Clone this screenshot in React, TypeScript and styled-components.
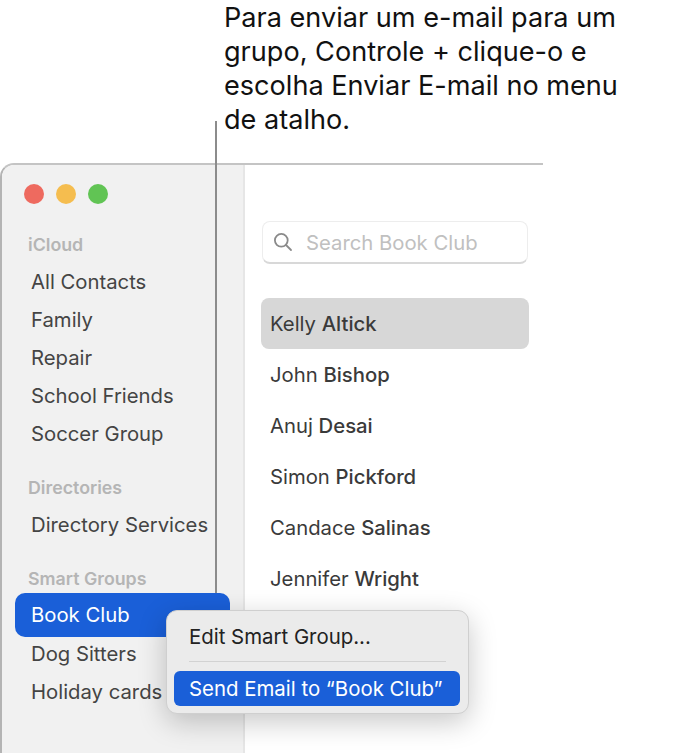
import styled, { createGlobalStyle } from "styled-components";

const GlobalStyle = createGlobalStyle`
  html, body {
    margin: 0;
    padding: 0;
    background: #ffffff;
  }
  body {
    font-family: Inter, "Liberation Sans", sans-serif;
    width: 673px;
    height: 753px;
    overflow: hidden;
  }
`;

const Page = styled.div`
  position: relative;
  width: 673px;
  height: 753px;
  overflow: hidden;
`;
const Caption = styled.div`
  height: 163px;
  box-sizing: border-box;
  padding: 1px 0 0 224px;
  font-size: 27.1px;
  line-height: 34px;
  color: #111111;
  white-space: nowrap;
`;
const Leader = styled.div`
  position: absolute;
  left: 215px;
  top: 121px;
  width: 2px;
  height: 472px;
  background: #8c8c8c;
`;
const Window = styled.div`
  width: 543px;
  height: 590px;
  box-sizing: border-box;
  display: flex;
  border-top: 2px solid #c4c4c4;
  border-left: 2px solid #b4b4b4;
  border-top-left-radius: 14px;
`;
const Sidebar = styled.div`
  width: 243px;
  flex: none;
  box-sizing: border-box;
  padding: 19px 0 0 13px;
  background: #f1f1f1;
  border-right: 2px solid #e6e6e6;
  border-top-left-radius: 12px;
`;
const Lights = styled.div`
  display: flex;
  gap: 12px;
  padding-left: 9px;
  margin-bottom: 28px;
`;
const Light = styled.span<{ $color: string }>`
  width: 20px;
  height: 20px;
  border-radius: 50%;
  background: ${(p) => p.$color};
`;
const SectionLabel = styled.div<{ $gap?: number }>`
  height: 24px;
  line-height: 26px;
  padding-left: 13px;
  margin-top: ${(p) => p.$gap ?? 0}px;
  margin-bottom: 7px;
  font-size: 17.8px;
  font-weight: 600;
  color: #b5b5b5;
`;
const SideItem = styled.div<{ $active?: boolean }>`
  width: 215px;
  box-sizing: border-box;
  padding-left: 16px;
  font-size: 20.3px;
  white-space: nowrap;
  border-radius: 10px;
  color: ${(p) => (p.$active ? "#ffffff" : "#444444")};
  background: ${(p) => (p.$active ? "#1a5fd8" : "transparent")};
  height: ${(p) => (p.$active ? "44px" : "38px")};
  line-height: ${(p) => (p.$active ? "44px" : "38px")};
  margin: ${(p) => (p.$active ? "-4px 0 -2px" : "0")};
`;
const Main = styled.div`
  flex: 1;
  padding: 56px 0 0 16px;
`;
const SearchBox = styled.div`
  width: 266px;
  height: 43px;
  box-sizing: border-box;
  display: flex;
  align-items: center;
  gap: 13px;
  padding-left: 10px;
  margin: 0 0 34px 1px;
  border: 1px solid #ededed;
  border-bottom: 2px solid #d8d8d8;
  border-radius: 8px;
  font-size: 20.3px;
  color: #c0c0c0;
`;
const ContactRow = styled.div<{ $selected?: boolean }>`
  width: 268px;
  height: 51px;
  line-height: 52px;
  box-sizing: border-box;
  padding-left: 9px;
  font-size: 20.3px;
  color: #3a3a3a;
  border-radius: 8px;
  background: ${(p) => (p.$selected ? "#d7d7d7" : "transparent")};
  b {
    font-weight: 500;
  }
`;
const Menu = styled.div`
  position: absolute;
  left: 166px;
  top: 610px;
  width: 303px;
  height: 104px;
  box-sizing: border-box;
  padding: 8px 8px 0 7px;
  background: #ebebeb;
  border: 1px solid #cfcfcf;
  border-radius: 11px;
  box-shadow: 0 8px 28px rgba(0, 0, 0, 0.22);
`;
const MenuItem = styled.div<{ $active?: boolean }>`
  height: ${(p) => (p.$active ? "35px" : "36px")};
  line-height: ${(p) => (p.$active ? "35px" : "36px")};
  padding-left: 15px;
  font-size: 20.4px;
  border-radius: 6px;
  white-space: nowrap;
  color: ${(p) => (p.$active ? "#ffffff" : "#222222")};
  background: ${(p) => (p.$active ? "#1a5fd8" : "transparent")};
`;
const MenuRule = styled.div`
  height: 1px;
  margin: 6px 14px 9px 15px;
  background: #d2d2d2;
`;

const contacts = [
  { first: "Kelly", last: "Altick" },
  { first: "John", last: "Bishop" },
  { first: "Anuj", last: "Desai" },
  { first: "Simon", last: "Pickford" },
  { first: "Candace", last: "Salinas" },
  { first: "Jennifer", last: "Wright" },
];

const App = () => {
  return (
    <Page>
      <GlobalStyle />
      <Caption>
        Para enviar um e-mail para um
        <br />
        grupo, Controle + clique-o e
        <br />
        escolha Enviar E-mail no menu
        <br />
        de atalho.
      </Caption>
      <Window>
        <Sidebar>
          <Lights>
            <Light $color="#ee6a5f" />
            <Light $color="#f5bd4f" />
            <Light $color="#61c454" />
          </Lights>
          <SectionLabel>iCloud</SectionLabel>
          <SideItem>All Contacts</SideItem>
          <SideItem>Family</SideItem>
          <SideItem>Repair</SideItem>
          <SideItem>School Friends</SideItem>
          <SideItem>Soccer Group</SideItem>
          <SectionLabel $gap={22}>Directories</SectionLabel>
          <SideItem>Directory Services</SideItem>
          <SectionLabel $gap={22}>Smart Groups</SectionLabel>
          <SideItem $active>Book Club</SideItem>
          <SideItem>Dog Sitters</SideItem>
          <SideItem>Holiday cards</SideItem>
        </Sidebar>
        <Main>
          <SearchBox>
            <svg width="20" height="20" viewBox="0 0 20 20" fill="none" stroke="#8a8a8a" strokeWidth="1.8" strokeLinecap="round">
              <circle cx="8.3" cy="8.3" r="6.4" />
              <path d="M13 13 L18 18" />
            </svg>
            Search Book Club
          </SearchBox>
          {contacts.map((c, i) => (
            <ContactRow key={c.last} $selected={i === 0}>
              {c.first} <b>{c.last}</b>
            </ContactRow>
          ))}
        </Main>
      </Window>
      <Leader />
      <Menu>
        <MenuItem>Edit Smart Group...</MenuItem>
        <MenuRule />
        <MenuItem $active>Send Email to “Book Club”</MenuItem>
      </Menu>
    </Page>
  );
};

export default App;
